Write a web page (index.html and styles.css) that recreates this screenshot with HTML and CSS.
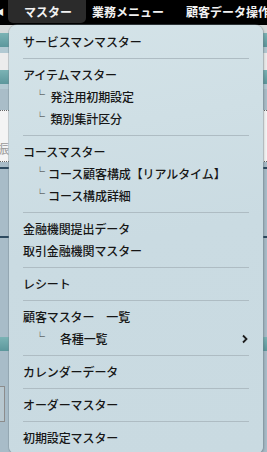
FILE: index.html
```html
<!DOCTYPE html>
<html lang="ja">
  <head>
    <meta charset="UTF-8" />
    <meta name="viewport" content="width=device-width, initial-scale=1.0" />
    <title>マスター</title>
    <link rel="stylesheet" href="styles.css">
  </head>

  <body>
    <div class="menubar">
      <span class="menubar-item edge">◀</span>
      <span class="menubar-item active">マスター</span>
      <span class="menubar-item">業務メニュー</span>
      <span class="menubar-item">顧客データ操作</span>
    </div>

    <div class="stage">
      <!-- 背景の画面 -->
      <div class="band gray"></div>
      <div class="band teal"></div>
      <div class="band pale"></div>
      <div class="band white"></div>
      <div class="band teal"></div>
      <div class="band pale short"></div>
      <div class="band form">振替</div>
      <div class="band slate">
        <div class="rule"></div>
        <div class="rule low"></div>
      </div>
      <div class="band teal"></div>
      <div class="band slate2">
        <div class="box"></div>
      </div>

      <!-- ドロップダウン -->
      <div class="dropdown">
        <div class="item">サービスマンマスター</div>
        <div class="sep"></div>
        <div class="item">アイテムマスター</div>
        <div class="item sub"><span class="tick">└</span> 発注用初期設定</div>
        <div class="item sub"><span class="tick">└</span> 類別集計区分</div>
        <div class="sep"></div>
        <div class="item">コースマスター</div>
        <div class="item sub"><span class="tick">└</span>コース顧客構成【リアルタイム】</div>
        <div class="item sub"><span class="tick">└</span>コース構成詳細</div>
        <div class="sep"></div>
        <div class="item">金融機関提出データ</div>
        <div class="item">取引金融機関マスター</div>
        <div class="sep"></div>
        <div class="item">レシート</div>
        <div class="sep"></div>
        <div class="item">顧客マスター　一覧</div>
        <div class="item sub has-arrow">
          <span><span class="tick">└</span>　各種一覧</span>
          <svg class="chevron" width="8" height="10" viewBox="0 0 8 10">
            <path d="M2 1.5 L5.5 5 L2 8.5" fill="none" stroke="#1e1e1e" stroke-width="1.8" />
          </svg>
        </div>
        <div class="sep"></div>
        <div class="item">カレンダーデータ</div>
        <div class="sep"></div>
        <div class="item">オーダーマスター</div>
        <div class="sep"></div>
        <div class="item">初期設定マスター</div>
      </div>
    </div>
  </body>
</html>
```

FILE: styles.css
```css
body {
  margin: 0;
  padding: 0;
  font-family: "Noto Sans CJK JP", "Noto Sans", sans-serif;
  background-color: #a9bdc8;
  width: 267px;
  height: 452px;
  overflow: hidden;
}

.menubar {
  height: 25px;
  background-color: #000;
  display: flex;
  align-items: flex-start;
  white-space: nowrap;
  overflow: hidden;
}

.menubar-item {
  color: #f2f2f2;
  font-size: 12px;
  font-weight: bold;
  line-height: 23px;
  padding: 0 11px;
  flex-shrink: 0;
}

.menubar-item.edge {
  width: 4px;
  padding: 0 4px 0 0;
  font-size: 8px;
  overflow: hidden;
  text-indent: -4px;
}

.menubar-item.active {
  background-color: #2b2b2b;
  border-radius: 0 0 5px 5px;
  padding: 0 16px;
  width: 46px;
  margin-right: -5px;
}

.stage {
  position: relative;
  height: 427px;
}

.band {
  height: 8px;
}

.band.gray {
  background-color: #d6dada;
}

.band.teal {
  height: 14px;
  background: linear-gradient(#7bb3b5, #5c979c);
}

.band.pale {
  height: 6px;
  background-color: #b2c9d2;
}

.band.pale.short {
  height: 5px;
}

.band.white {
  height: 17px;
  background-color: #ececec;
}

.band.form {
  height: 52px;
  background-color: #f4f4f4;
  border-top: 1px dotted #666;
  border-bottom: 1px dotted #666;
  color: #999;
  font-size: 13px;
  padding-top: 27px;
  box-sizing: border-box;
  margin-top: 21px;
  text-indent: -4px;
  overflow: hidden;
  white-space: nowrap;
}

.band.slate {
  height: 175px;
  background-color: #a8bcc8;
  padding-top: 5px;
  box-sizing: border-box;
}

.rule {
  height: 2px;
  background-color: #2d4a60;
}

.rule.low {
  margin-top: 67px;
}

.band.teal + .band.slate2 {
  height: 120px;
}

.band.slate2 {
  background-color: #a8bcc8;
  padding-top: 35px;
  box-sizing: border-box;
}

.box {
  width: 4px;
  height: 34px;
  border: 1px solid #8c8c8c;
  border-left: none;
  background-color: #b8c8d0;
}

.dropdown {
  position: absolute;
  top: 0;
  left: 9px;
  width: 254px;
  height: 428px;
  box-sizing: border-box;
  padding: 6px 14px 0 14px;
  background: linear-gradient(170deg, #d4e3e8 0%, #cadbe2 50%, #c9dae1 100%);
  border-radius: 8px 8px 6px 6px;
  box-shadow: 0 0 0 1px rgba(120, 140, 150, 0.35), 1px 1px 3px rgba(0, 0, 0, 0.2);
}

.item {
  height: 22px;
  line-height: 22px;
  font-size: 12px;
  font-weight: 500;
  color: #161616;
  white-space: nowrap;
  letter-spacing: -0.1px;
}

.item.sub {
  padding-left: 12px;
}

.tick {
  display: inline-block;
  width: 10px;
  margin-right: 3px;
  font-size: 10px;
  font-weight: normal;
  line-height: 10px;
  color: #333;
  vertical-align: 3px;
}

.item.has-arrow {
  display: flex;
  justify-content: space-between;
  align-items: center;
}

.chevron {
  margin-right: 0;
}

.sep {
  height: 1px;
  margin: 5px 0 5px 0;
  background-color: #aebcc3;
}
```
